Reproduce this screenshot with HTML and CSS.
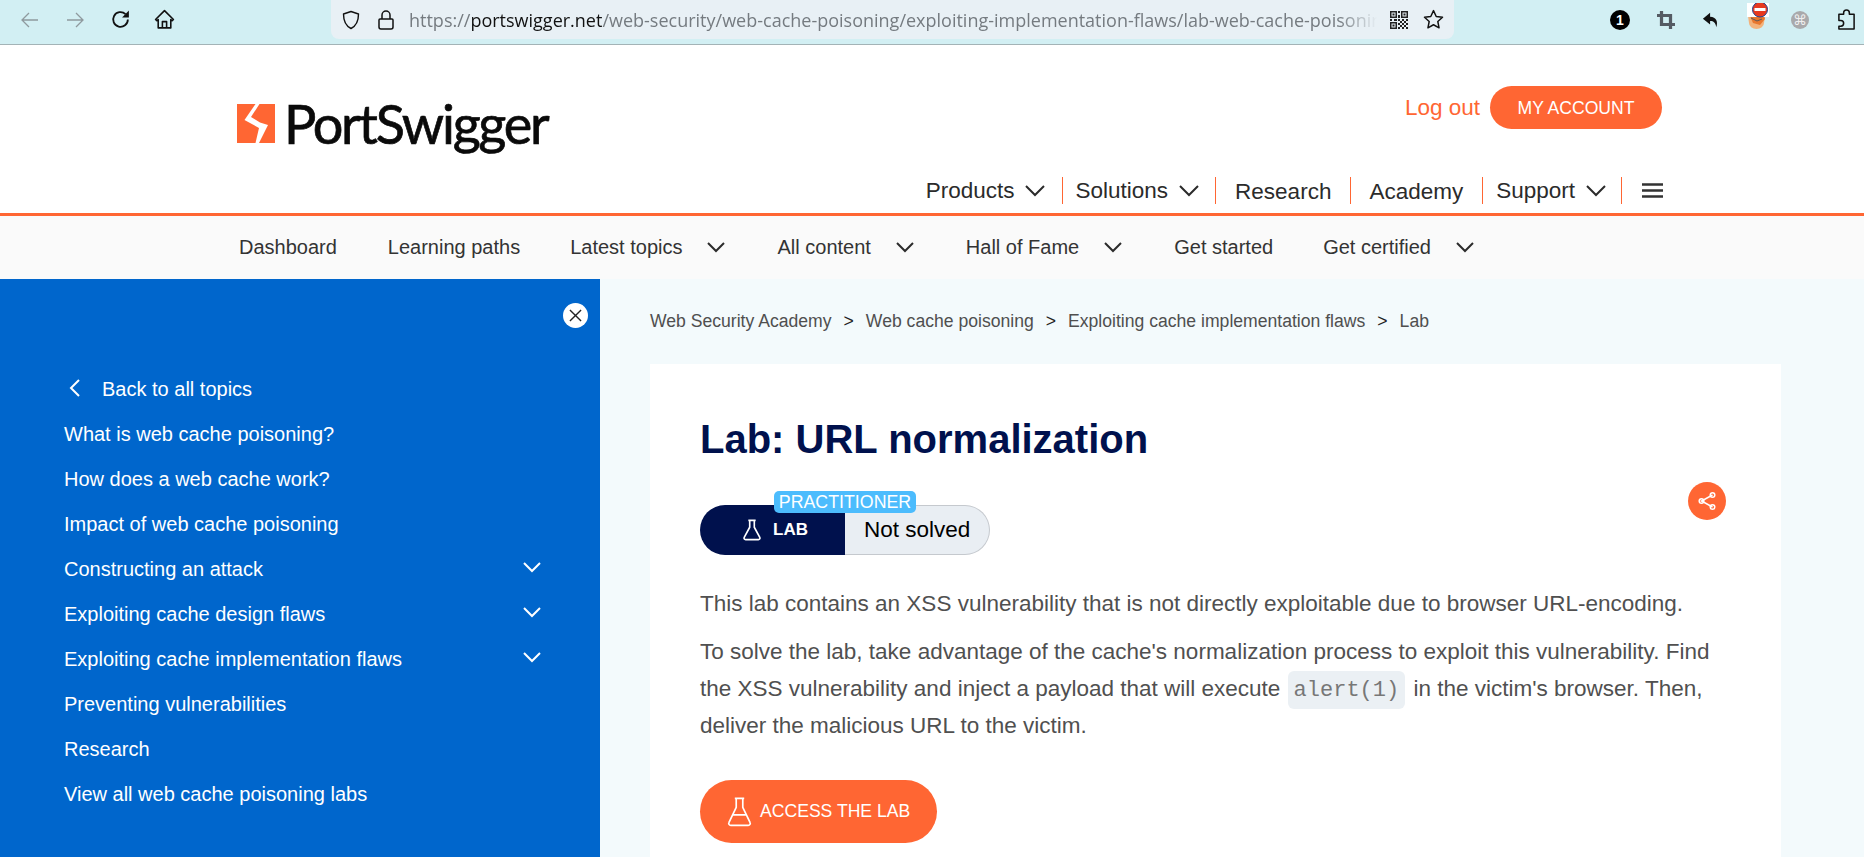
FILE: index.html
```html
<!DOCTYPE html>
<html lang="en">
<head>
<meta charset="UTF-8">
<title>Lab: URL normalization | Web Security Academy</title>
<link rel="stylesheet" href="styles.css">
</head>
<body>

<!-- browser toolbar -->
<div class="toolbar">
    <div class="tool-group">
        <svg class="tool tool-back" viewBox="0 0 20 20"><path d="M18 10H2M9 3l-7 7 7 7" fill="none" stroke="#8f9a9e" stroke-width="1.3"/></svg>
        <svg class="tool tool-forward" viewBox="0 0 20 20"><path d="M2 10h16M11 3l7 7-7 7" fill="none" stroke="#8f9a9e" stroke-width="1.3"/></svg>
        <svg class="tool tool-reload" viewBox="0 0 20 20"><path d="M17 10a7 7 0 1 1-2.2-5.1" fill="none" stroke="#111" stroke-width="1.7"/><path d="M18 1.5v6.5h-6.5z" fill="#111"/></svg>
        <svg class="tool tool-home" viewBox="0 0 20 20"><path d="M10 1.5 1.5 10l1.2 1.2L4 10v8h12v-8l1.3 1.2 1.2-1.2zM8 18v-6h4v6" fill="none" stroke="#111" stroke-width="1.5" stroke-linejoin="round"/></svg>
    </div>
    <div class="address">
        <svg class="addr-icon addr-shield" viewBox="0 0 20 20"><path d="M10 1.500 2.500 4c0 7 1.500 11.500 7.500 14.500 6-3 7.500-7.500 7.500-14.500z" fill="none" stroke="#111" stroke-width="1.4" stroke-linejoin="round"/></svg>
        <svg class="addr-icon addr-lock" viewBox="0 0 20 20"><path d="M4 9h12a1 1 0 0 1 1 1v7a2 2 0 0 1-2 2H5a2 2 0 0 1-2-2v-7a1 1 0 0 1 1-1zM6 9V5a4 4 0 0 1 8 0v4" fill="none" stroke="#111" stroke-width="1.5"/></svg>
        <div class="url"><span class="url-dim">https://</span>portswigger.net<span class="url-dim">/web-security/web-cache-poisoning/exploiting-implementation-flaws/lab-web-cache-poisonin</span></div>
        <svg class="addr-icon addr-qr" viewBox="0 0 18 18" fill="#222">
            <path d="M0 0h7v7H0zM1.500 1.500v4h4v-4zM2.500 2.500h2v2h-2zM11 0h7v7h-7zM12.500 1.500v4h4v-4zM13.500 2.500h2v2h-2zM0 11h7v7H0zM1.500 12.500v4h4v-4zM2.500 13.500h2v2h-2z" fill-rule="evenodd"/>
            <path d="M8 0h2v2H8zM8 4h2v3H8zM0 8h2v2H0zM4 8h3v2H4zM8 8h2v2H8zM12 8h2v2h-2zM16 8h2v2h-2zM10 10h2v2h-2zM14 10h2v2h-2zM8 12h2v2H8zM12 12h2v2h-2zM16 12h2v2h-2zM10 14h2v2h-2zM14 14h2v2h-2zM8 16h2v2H8zM12 16h2v2h-2zM16 16h2v2h-2z"/>
        </svg>
        <svg class="addr-icon addr-star" viewBox="0 0 20 20"><path d="M10 1.500l2.600 5.600 6 .7-4.500 4.100 1.200 6L10 15l-5.300 2.900 1.200-6L1.400 7.800l6-.7z" fill="none" stroke="#111" stroke-width="1.4" stroke-linejoin="round"/></svg>
    </div>
    <div class="extensions">
        <div class="ext-badge">1</div>
        <svg class="ext ext-crop" viewBox="0 0 20 20"><path d="M5 0v15h15M0 5h15v15" fill="none" stroke="#555b63" stroke-width="3.600"/></svg>
        <svg class="ext ext-undo" viewBox="0 0 20 20"><path d="M9 2 1 8.500 9 15v-4c4 0 6 2 7 7 2-6 0-11-7-11.500z" fill="#111"/></svg>
        <svg class="ext ext-fox" viewBox="0 0 23 26">
            <path d="M1 13h17l-1 7a7.500 6 0 0 1-15 0z" fill="#f3b27a"/>
            <path d="M3 13h14l1 3-5 6-7-2z" fill="#e8772e"/>
            <path d="M4 15l6 3 5-2" fill="none" stroke="#5a5a5a" stroke-width="1"/>
            <rect x="0" y="0" width="22" height="14" fill="#fff"/>
            <circle cx="13" cy="6.500" r="7.500" fill="#e6391f" stroke="#1b3f8f" stroke-width="1"/>
            <rect x="7.500" y="5" width="11" height="3" fill="#fff"/>
        </svg>
        <div class="ext-cmd">⌘</div>
        <svg class="ext ext-puzzle" viewBox="0 0 20 22"><path d="M8 4.500V3a3 3 0 0 1 6 0v1.500h5V20H3v-3h2a3 3 0 0 0 0-6H3V4.500z" transform="translate(-1 1)" fill="none" stroke="#111" stroke-width="1.600" stroke-linejoin="round"/></svg>
    </div>
</div>

<!-- site header -->
<header class="site-header">
    <div class="header-top">
        <div class="logo">
            <svg class="logo-mark" viewBox="0 0 38 39"><path d="M0 0h38v39H0z" fill="#ff6633"/><path d="M18.500 0h4L14 13l9 5.500 8 2.500-9 18h-3.500l3.500-15L7.500 16z" fill="#fff"/></svg>
            <span class="logo-text">PortSwigger</span>
        </div>
        <div class="account">
            <a class="logout">Log out</a>
            <a class="btn-account">MY ACCOUNT</a>
        </div>
    </div>
    <nav class="main-nav">
        <a class="nav-item nav-products">Products<svg class="chev chev-main" viewBox="0 0 20 12"><path d="M1 1l9 9 9-9"/></svg></a>
        <a class="nav-item nav-solutions">Solutions<svg class="chev chev-main" viewBox="0 0 20 12"><path d="M1 1l9 9 9-9"/></svg></a>
        <a class="nav-item nav-research">Research</a>
        <a class="nav-item nav-academy">Academy</a>
        <a class="nav-item nav-support">Support<svg class="chev chev-main" viewBox="0 0 20 12"><path d="M1 1l9 9 9-9"/></svg></a>
        <svg class="burger" viewBox="0 0 21 15"><path d="M0 1.500h21M0 7.500h21M0 13.500h21" stroke="#333" stroke-width="2.400"/></svg>
    </nav>
</header>

<!-- academy sub navigation -->
<div class="sub-nav">
    <a class="sub-item">Dashboard</a>
    <a class="sub-item">Learning paths</a>
    <a class="sub-item has-chev">Latest topics<svg class="chev chev-sub" viewBox="0 0 18 11"><path d="M1 1l8 8 8-8"/></svg></a>
    <a class="sub-item has-chev">All content<svg class="chev chev-sub" viewBox="0 0 18 11"><path d="M1 1l8 8 8-8"/></svg></a>
    <a class="sub-item has-chev">Hall of Fame<svg class="chev chev-sub" viewBox="0 0 18 11"><path d="M1 1l8 8 8-8"/></svg></a>
    <a class="sub-item">Get started</a>
    <a class="sub-item has-chev">Get certified<svg class="chev chev-sub" viewBox="0 0 18 11"><path d="M1 1l8 8 8-8"/></svg></a>
</div>

<div class="page">
    <aside class="sidebar">
        <div class="close-row">
            <div class="close-btn"><svg viewBox="0 0 14 14"><path d="M1 1l12 12M13 1 1 13" stroke="#222" stroke-width="1.500"/></svg></div>
        </div>
        <ul class="side-list">
            <li class="side-item side-back"><svg class="back-chev" viewBox="0 0 11 18"><path d="M10 1 2 9l8 8"/></svg>Back to all topics</li>
            <li class="side-item">What is web cache poisoning?</li>
            <li class="side-item">How does a web cache work?</li>
            <li class="side-item">Impact of web cache poisoning</li>
            <li class="side-item">Constructing an attack<svg class="side-chev" viewBox="0 0 18 11"><path d="M1 1l8 8 8-8"/></svg></li>
            <li class="side-item">Exploiting cache design flaws<svg class="side-chev" viewBox="0 0 18 11"><path d="M1 1l8 8 8-8"/></svg></li>
            <li class="side-item">Exploiting cache implementation flaws<svg class="side-chev" viewBox="0 0 18 11"><path d="M1 1l8 8 8-8"/></svg></li>
            <li class="side-item">Preventing vulnerabilities</li>
            <li class="side-item">Research</li>
            <li class="side-item">View all web cache poisoning labs</li>
        </ul>
    </aside>

    <main class="content">
        <div class="breadcrumbs">
            <a>Web Security Academy</a><span class="crumb-sep">&gt;</span>
            <a>Web cache poisoning</a><span class="crumb-sep">&gt;</span>
            <a>Exploiting cache implementation flaws</a><span class="crumb-sep">&gt;</span>
            <a>Lab</a>
        </div>
        <article class="card">
            <h1>Lab: URL normalization</h1>
            <div class="status-row">
                <div class="lab-status">
                    <span class="level">PRACTITIONER</span>
                    <div class="status-lab">
                        <svg class="flask-small" viewBox="0 0 20 24"><path d="M6 1.500h8M7.500 1.500V9L1.500 20a1.700 1.700 0 0 0 1.500 2.500h14a1.700 1.700 0 0 0 1.500-2.500L12.500 9V1.500" fill="none" stroke="#fff" stroke-width="1.800" stroke-linejoin="round"/></svg>
                        <span>LAB</span>
                    </div>
                    <div class="status-text">Not solved</div>
                </div>
                <a class="share"><svg viewBox="0 0 20 20"><path d="M15.500 4 4.500 10l11 6" fill="none" stroke="#fff" stroke-width="1.500"/><circle cx="15.500" cy="4" r="2.300" fill="none" stroke="#fff" stroke-width="1.500"/><circle cx="4.500" cy="10" r="2.300" fill="none" stroke="#fff" stroke-width="1.500"/><circle cx="15.500" cy="16" r="2.300" fill="none" stroke="#fff" stroke-width="1.500"/></svg></a>
            </div>
            <p>This lab contains an XSS vulnerability that is not directly exploitable due to browser URL-encoding.</p>
            <p>To solve the lab, take advantage of the cache's normalization process to exploit this vulnerability. Find the XSS vulnerability and inject a payload that will execute <code>alert(1)</code> in the victim's browser. Then, deliver the malicious URL to the victim.</p>
            <a class="btn-access">
                <svg class="flask-big" viewBox="0 0 26 32"><path d="M8 1.500h10M9.500 1.500V11L1.800 27a2.200 2.200 0 0 0 2 3.300h18.400a2.200 2.200 0 0 0 2-3.300L16.500 11V1.500M6 19h14" fill="none" stroke="#fff" stroke-width="1.800" stroke-linejoin="round"/></svg>
                ACCESS THE LAB
            </a>
        </article>
    </main>
</div>

</body>
</html>
```

FILE: styles.css
```css
* {
    box-sizing: border-box;
}
html, body {
    margin: 0;
    padding: 0;
}
body {
    height: 857px;
    overflow: hidden;
    font-family: "Liberation Sans", Arial, sans-serif;
    background-color: #fff;
    color: #333;
    display: flex;
    flex-direction: column;
}
a {
    text-decoration: none;
    color: inherit;
}

/* browser toolbar */
.toolbar {
    height: 45px;
    flex: none;
    display: flex;
    background-color: #d2eff3;
    border-bottom: 1px solid #a3b3b6;
}
.tool-group {
    width: 331px;
    flex: none;
    display: flex;
    align-items: center;
    padding: 0 0 5px 20px;
}
.tool {
    width: 20px;
    height: 20px;
    flex: none;
}
.tool-back { width: 20px; height: 20px; }
.tool-forward { margin-left: 25px; width: 20px; height: 20px; }
.tool-reload { margin-left: 25px; width: 21px; height: 21px; }
.tool-home { margin-left: 23px; width: 21px; height: 21px; }
.address {
    width: 1123px;
    height: 39px;
    flex: none;
    display: flex;
    align-items: center;
    padding-left: 10px;
    background-color: #e8f0f5;
    border-radius: 0 0 8px 8px;
}
.addr-icon {
    flex: none;
    width: 20px;
    height: 20px;
}
.addr-lock { margin-left: 15px; }
.addr-qr { margin-left: 3px; width: 18px; height: 18px; }
.addr-star { margin-left: 15px; width: 21px; height: 21px; }
.url {
    margin-left: 13px;
    width: 978px;
    flex: none;
    white-space: nowrap;
    overflow: hidden;
    font-family: "Open Sans", sans-serif;
    font-size: 18px;
    color: #111;
    -webkit-mask-image: linear-gradient(to right, #000 95%, transparent 99%);
    mask-image: linear-gradient(to right, #000 95%, transparent 99%);
}
.url-dim {
    color: #757b80;
}
.extensions {
    flex: 1;
    display: flex;
    align-items: center;
    padding: 0 0 5px 156px;
}
.ext {
    flex: none;
}
.ext-badge {
    width: 20px;
    height: 20px;
    flex: none;
    border-radius: 50%;
    background-color: #000;
    color: #fff;
    font-size: 14px;
    font-weight: bold;
    line-height: 20px;
    text-align: center;
}
.ext-crop { width: 18px; height: 18px; margin-left: 27px; }
.ext-undo { width: 18px; height: 18px; margin-left: 27px; }
.ext-fox { width: 23px; height: 26px; margin: 0 0 7px 27px; }
.ext-cmd {
    width: 18px;
    height: 18px;
    flex: none;
    margin-left: 21px;
    border-radius: 50%;
    background-color: #a9a9ab;
    color: #eee;
    font-family: "DejaVu Sans", sans-serif;
    font-size: 14px;
    line-height: 18px;
    text-align: center;
}
.ext-puzzle { width: 19px; height: 21px; margin-left: 28px; }

/* site header */
.site-header {
    height: 171px;
    flex: none;
    padding: 0 201px 0 237px;
    border-bottom: 3px solid #ff6633;
}
.header-top {
    height: 123px;
    display: flex;
    justify-content: space-between;
    align-items: flex-start;
}
.logo {
    display: flex;
    align-items: flex-start;
    padding-top: 59px;
}
.logo-mark {
    width: 38px;
    height: 39px;
    flex: none;
}
.logo-text {
    margin-left: 9px;
    font-family: "Lato", sans-serif;
    font-size: 54px;
    line-height: 39px;
    letter-spacing: -2.25px;
    color: #0a0a0a;
    -webkit-text-stroke: 0.7px #0a0a0a;
}
.account {
    display: flex;
    align-items: center;
    padding-top: 41px;
    margin-right: 1px;
}
.logout {
    font-size: 22.5px;
    color: #ff6633;
}
.btn-account {
    margin-left: 10px;
    width: 172px;
    height: 43px;
    border-radius: 22px;
    background-color: #ff6633;
    color: #fff;
    font-size: 17.6px;
    line-height: 44px;
    text-align: center;
}
.main-nav {
    display: flex;
    justify-content: flex-end;
    align-items: center;
    height: 27px;
    margin-top: 9px;
}
.nav-item {
    height: 27px;
    display: flex;
    align-items: center;
    border-right: 1px solid #ff6633;
    font-size: 22.5px;
    color: #2b2b2b;
}
.nav-products { padding-right: 17px; }
.nav-solutions { padding: 0 16px 0 13px; }
.nav-research { padding: 3px 19px 0 19px; }
.nav-academy { padding: 3px 19px 0 18px; }
.nav-support { padding: 0 15px 0 13px; }
.chev {
    flex: none;
    fill: none;
    stroke: #2b2b2b;
}
.chev-main {
    width: 20px;
    height: 12px;
    margin-left: 11px;
    stroke-width: 2;
}
.nav-products .chev-main {
    margin-left: 10px;
}
.burger {
    width: 21px;
    height: 15px;
    margin-left: 20px;
}

/* academy sub navigation */
.sub-nav {
    height: 63px;
    flex: none;
    display: flex;
    align-items: center;
    gap: 50px;
    padding: 0 0 1px 239px;
    background-color: #fafafa;
    font-size: 20px;
    color: #333;
}
.sub-item {
    display: flex;
    align-items: center;
}
.sub-item:first-child {
    margin-right: 1px;
}
.chev-sub {
    width: 18px;
    height: 11px;
    margin: 0 2px 0 25px;
    stroke-width: 2;
}

.page {
    flex: 1;
    min-height: 0;
    display: flex;
}

/* left sidebar */
.sidebar {
    width: 600px;
    flex: none;
    padding: 0 59px 0 64px;
    background-color: #0066cc;
    color: #fff;
}
.close-row {
    display: flex;
    justify-content: flex-end;
    height: 88px;
    padding: 24px 0 0;
    margin-right: -47px;
}
.close-btn {
    width: 25px;
    height: 25px;
    border-radius: 50%;
    background-color: #fff;
    display: flex;
    align-items: center;
    justify-content: center;
}
.close-btn svg {
    width: 13px;
    height: 13px;
}
.side-list {
    list-style: none;
    margin: 0;
    padding: 0;
}
.side-item {
    height: 45px;
    display: flex;
    justify-content: flex-start;
    align-items: center;
    font-size: 20px;
}
.side-chev {
    width: 18px;
    height: 11px;
    margin: 0 0 4px auto;
    fill: none;
    stroke: #fff;
    stroke-width: 2;
}
.back-chev {
    width: 11px;
    height: 18px;
    margin: -3px 22px 0 5px;
    fill: none;
    stroke: #fff;
    stroke-width: 2;
}

/* main content */
.content {
    flex: 1;
    min-width: 0;
    padding: 0 83px 0 50px;
    background-color: #f3fafc;
}
.breadcrumbs {
    height: 85px;
    display: flex;
    align-items: center;
    font-size: 17.6px;
    color: #4f4f4f;
}
.crumb-sep {
    margin: 0 12px;
    color: #222;
}
.card {
    height: 500px;
    padding: 52px 50px 0 50px;
    background-color: #fff;
}
h1 {
    margin: 0;
    font-size: 40px;
    line-height: 46px;
    color: #00114d;
}
.status-row {
    display: flex;
    justify-content: space-between;
    align-items: flex-start;
    margin-top: 34px;
    height: 89px;
}
.lab-status {
    position: relative;
    width: 290px;
    height: 50px;
    margin-top: 9px;
    display: flex;
    border-radius: 25px;
}
.level {
    position: absolute;
    left: 74px;
    top: -14px;
    width: 142px;
    height: 22px;
    border-radius: 5px;
    background-color: #4cbcfd;
    color: #fff;
    font-size: 17.8px;
    line-height: 22px;
    text-align: center;
    z-index: 1;
}
.status-lab {
    width: 145px;
    flex: none;
    display: flex;
    align-items: center;
    padding-left: 42px;
    border-radius: 25px 0 0 25px;
    background-color: #00114d;
    color: #fff;
    font-size: 17px;
    font-weight: bold;
}
.flask-small {
    width: 20px;
    height: 22px;
    margin-right: 11px;
}
.status-text {
    flex: 1;
    padding-left: 19px;
    border: 1px solid #c5c9ce;
    border-left: none;
    border-radius: 0 25px 25px 0;
    background-color: #e9eef3;
    color: #000;
    font-size: 22.5px;
    line-height: 48px;
}
.share {
    width: 38px;
    height: 38px;
    margin: -14px 5px 0 0;
    border-radius: 50%;
    background-color: #ff6633;
    display: flex;
    align-items: center;
    justify-content: center;
}
.share svg {
    width: 20px;
    height: 20px;
}
p {
    margin: 0 0 11px;
    font-size: 22.5px;
    line-height: 37px;
    color: #505050;
}
code {
    margin: 0 2px 0 1px;
    padding: 7px 6px 6px;
    border-radius: 6px;
    background-color: #ebf0f4;
    font-family: "Liberation Mono", monospace;
    font-size: 22px;
    line-height: 20px;
    color: #777;
}
.btn-access {
    margin-top: 36px;
    width: 237px;
    height: 63px;
    display: flex;
    align-items: center;
    padding-left: 27px;
    border-radius: 32px;
    background-color: #ff6633;
    color: #fff;
    font-size: 17.6px;
}
.flask-big {
    width: 25px;
    height: 30px;
    margin-right: 8px;
    flex: none;
}
```
